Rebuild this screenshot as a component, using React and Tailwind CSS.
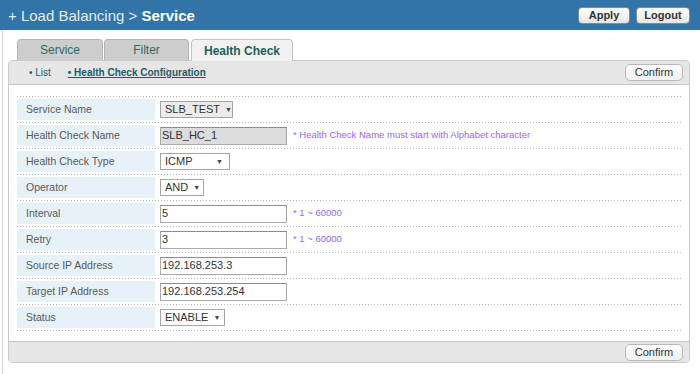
import React from 'react';

const font = { fontFamily: '"Liberation Sans", Arial, sans-serif' };

const Select = ({ value, width, gray }) => (
  <div
    className={`flex items-center justify-between gap-[5px] h-[17px] border border-[#a5a5a5] pl-[4px] pr-[6px] text-[11px] text-[#333] leading-none ${gray ? 'bg-[#ececec]' : 'bg-white'} ${width}`}
  >
    <span>{value}</span>
    <span className="text-[7px] text-[#444]">▼</span>
  </div>
);

const TextInput = ({ value, gray }) => (
  <div
    className={`flex items-center h-[18px] w-[127px] border border-[#a9a9a9] border-t-[#8d8d8d] pl-[1px] text-[11px] text-[#333] leading-none ${gray ? 'bg-[#dcdcdc]' : 'bg-white'}`}
  >
    {value}
  </div>
);

const Hint = ({ children }) => (
  <span className="ml-[6px] text-[9.5px] text-[#9966ff]">{children}</span>
);

const Dots = () => (
  <div className="h-[1px] bg-[repeating-linear-gradient(to_right,#b9b9b9_0px,#b9b9b9_1px,transparent_1px,transparent_3px)]" />
);

const rows = [
  { label: 'Service Name', field: <Select value="SLB_TEST" width="w-[73px]" gray /> },
  {
    label: 'Health Check Name',
    field: (
      <>
        <TextInput value="SLB_HC_1" gray />
        <Hint>* Health Check Name must start with Alphabet character</Hint>
      </>
    ),
  },
  { label: 'Health Check Type', field: <Select value="ICMP" width="w-[70px]" /> },
  { label: 'Operator', field: <Select value="AND" width="w-[44px]" /> },
  {
    label: 'Interval',
    field: (
      <>
        <TextInput value="5" />
        <Hint>* 1 ~ 60000</Hint>
      </>
    ),
  },
  {
    label: 'Retry',
    field: (
      <>
        <TextInput value="3" />
        <Hint>* 1 ~ 60000</Hint>
      </>
    ),
  },
  { label: 'Source IP Address', field: <TextInput value="192.168.253.3" /> },
  { label: 'Target IP Address', field: <TextInput value="192.168.253.254" /> },
  { label: 'Status', field: <Select value="ENABLE" width="w-[65px]" /> },
];

const ConfirmButton = () => (
  <button className="h-[17px] w-[58px] rounded-[5px] border border-[#b8b8b8] bg-gradient-to-b from-white to-[#f0f0f0] text-[11px] text-[#333] leading-none">
    Confirm
  </button>
);

const HeaderButton = ({ children, width }) => (
  <button
    className={`h-[17px] ${width} rounded-[4px] border border-[#8a8a8a] bg-gradient-to-b from-white to-[#e6e6e6] text-[11px] font-bold text-[#333] leading-none`}
  >
    {children}
  </button>
);

export default function App() {
  return (
    <div className="w-[700px] h-[374px] bg-white overflow-hidden" style={font}>
      <div className="h-[30px] bg-[#3374a8] flex items-center justify-between pl-[8px] pr-[10px]">
        <div className="text-[15px] text-[#e4ecf4] leading-none">
          + Load Balancing &gt; <span className="font-bold text-white">Service</span>
        </div>
        <div className="flex gap-[6px] mt-[1px]">
          <HeaderButton width="w-[52px]">Apply</HeaderButton>
          <HeaderButton width="w-[54px]">Logout</HeaderButton>
        </div>
      </div>

      <div className="ml-[2px] border-l border-[#d6d6d6] h-[344px] pl-[5px] pt-[9px]">
        <div className="flex items-end ml-[9px] h-[21px] relative z-10">
          <div className="w-[86px] h-[21px] mr-[1px] rounded-t-[4px] border border-b-0 border-[#b5b5b5] bg-[#cdcdcd] flex items-center justify-center text-[12px] text-[#2f6a6a]">
            Service
          </div>
          <div className="w-[85px] h-[21px] mr-[2px] rounded-t-[4px] border border-b-0 border-[#b5b5b5] bg-[#cdcdcd] flex items-center justify-center text-[12px] text-[#2f6a6a]">
            Filter
          </div>
          <div className="w-[102px] h-[22px] -mb-[1px] rounded-t-[4px] border border-b-0 border-[#c4c4c4] bg-[#f1f1f1] flex items-center justify-center text-[12px] font-bold text-[#1f5e5e]">
            Health Check
          </div>
        </div>

        <div className="w-[682px] rounded-[4px] border border-[#c9c9c9] overflow-hidden">
          <div className="h-[24px] bg-[#e6e6e6] border-b border-[#c6c6c6] flex items-center justify-between pl-[20px] pr-[6px]">
            <div className="flex items-center text-[10px] text-[#1d5c66]">
              <span>• List</span>
              <span className="ml-[17px] font-bold underline">• Health Check Configuration</span>
            </div>
            <ConfirmButton />
          </div>

          <div className="bg-white pl-[8px] pr-[6px] pt-[11px] pb-[10px]">
            <Dots />
            {rows.map((r) => (
              <div key={r.label}>
                <div className="flex items-center h-[25px]">
                  <div className="w-[138px] h-[21px] bg-[#e7f2f8] flex items-center pl-[9px] text-[10.5px] text-[#595959]">
                    {r.label}
                  </div>
                  <div className="flex items-center pl-[5px]">{r.field}</div>
                </div>
                <Dots />
              </div>
            ))}
          </div>

          <div className="h-[21px] bg-[#e6e6e6] border-t border-[#c6c6c6] flex items-center justify-end pr-[6px]">
            <ConfirmButton />
          </div>
        </div>
      </div>
    </div>
  );
}
